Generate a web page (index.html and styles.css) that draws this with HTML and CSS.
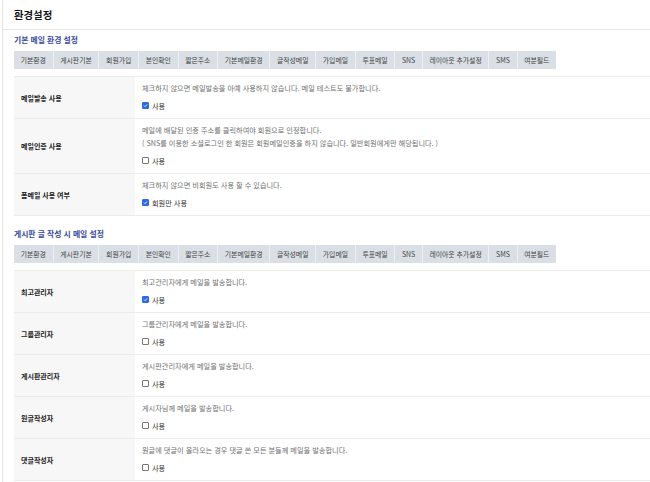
FILE: index.html
```html
<!DOCTYPE html>
<html lang="ko">
<head>
<meta charset="utf-8">
<title>환경설정</title>
<link rel="stylesheet" href="styles.css">
</head>
<body>
<div class="page">
  <div class="page-head"><h1>환경설정</h1></div>
  <div class="wrap">
    <h2 class="sec-title">기본 메일 환경 설정</h2>
    <ul class="tabs">
      <li>기본환경</li><li>게시판기본</li><li>회원가입</li><li>본인확인</li><li>짧은주소</li><li>기본메일환경</li><li>글작성메일</li><li>가입메일</li><li>투표메일</li><li>SNS</li><li>레이아웃 추가설정</li><li>SMS</li><li>여분필드</li>
    </ul>
    <div class="table">
      <div class="row">
        <div class="th">메일발송 사용</div>
        <div class="td">
          <p class="desc">체크하지 않으면 메일발송을 아예 사용하지 않습니다. 메일 테스트도 불가합니다.</p>
          <label class="chk"><span class="box on"><svg viewBox="0 0 8 8"><path d="M1.6 4.2 L3.3 5.9 L6.5 2.2" /></svg></span>사용</label>
        </div>
      </div>
      <div class="row">
        <div class="th">메일인증 사용</div>
        <div class="td">
          <p class="desc">메일에 배달된 인증 주소를 클릭하여야 회원으로 인정합니다.</p>
          <p class="desc">( SNS를 이용한 소셜로그인 한 회원은 회원메일인증을 하지 않습니다. 일반회원에게만 해당됩니다. )</p>
          <label class="chk"><span class="box"></span>사용</label>
        </div>
      </div>
      <div class="row">
        <div class="th">폼메일 사용 여부</div>
        <div class="td">
          <p class="desc">체크하지 않으면 비회원도 사용 할 수 있습니다.</p>
          <label class="chk"><span class="box on"><svg viewBox="0 0 8 8"><path d="M1.6 4.2 L3.3 5.9 L6.5 2.2" /></svg></span>회원만 사용</label>
        </div>
      </div>
    </div>

    <h2 class="sec-title second">게시판 글 작성 시 메일 설정</h2>
    <ul class="tabs">
      <li>기본환경</li><li>게시판기본</li><li>회원가입</li><li>본인확인</li><li>짧은주소</li><li>기본메일환경</li><li>글작성메일</li><li>가입메일</li><li>투표메일</li><li>SNS</li><li>레이아웃 추가설정</li><li>SMS</li><li>여분필드</li>
    </ul>
    <div class="table">
      <div class="row">
        <div class="th">최고관리자</div>
        <div class="td">
          <p class="desc">최고관리자에게 메일을 발송합니다.</p>
          <label class="chk"><span class="box on"><svg viewBox="0 0 8 8"><path d="M1.6 4.2 L3.3 5.9 L6.5 2.2" /></svg></span>사용</label>
        </div>
      </div>
      <div class="row">
        <div class="th">그룹관리자</div>
        <div class="td">
          <p class="desc">그룹관리자에게 메일을 발송합니다.</p>
          <label class="chk"><span class="box"></span>사용</label>
        </div>
      </div>
      <div class="row">
        <div class="th">게시판관리자</div>
        <div class="td">
          <p class="desc">게시판관리자에게 메일을 발송합니다.</p>
          <label class="chk"><span class="box"></span>사용</label>
        </div>
      </div>
      <div class="row">
        <div class="th">원글작성자</div>
        <div class="td">
          <p class="desc">게시자님께 메일을 발송합니다.</p>
          <label class="chk"><span class="box"></span>사용</label>
        </div>
      </div>
      <div class="row">
        <div class="th">댓글작성자</div>
        <div class="td">
          <p class="desc">원글에 댓글이 올라오는 경우 댓글 쓴 모든 분들께 메일을 발송합니다.</p>
          <label class="chk"><span class="box"></span>사용</label>
        </div>
      </div>
    </div>
  </div>
</div>
</body>
</html>
```

FILE: styles.css
```css
* { box-sizing: border-box; }
html, body { margin: 0; padding: 0; background: #fff; }
body {
  font-family: "Noto Sans CJK KR", "Noto Sans", sans-serif;
  font-size: 7px;
  color: #333;
  overflow: hidden;
}
.page {
  margin-left: 2px;
  border-left: 1px solid #e4e4e4;
  min-height: 482px;
}
.page-head {
  height: 30px;
  border-bottom: 1px solid #e8e8e8;
  padding-left: 11px;
  display: flex;
  align-items: center;
}
.page-head h1 {
  margin: 0;
  font-size: 10.4px;
  font-weight: 700;
  color: #111;
  line-height: 12px;
}
.wrap {
  padding-left: 11px;
}
.sec-title {
  margin: 5px 0 0;
  font-size: 7.8px;
  line-height: 10px;
  font-weight: 700;
  color: #3a4ba0;
}
.sec-title.second { margin-top: 13px; }
.tabs {
  list-style: none;
  margin: 6px 0 0;
  padding: 0;
  display: flex;
  width: max-content;
  background: #d9dfe4;
}
.tabs li {
  padding: 0 6.7px;
  line-height: 18px;
  height: 18px;
  font-size: 6.85px;
  color: #444;
  border-right: 1px solid #eef1f3;
  white-space: nowrap;
}
.tabs li:last-child { border-right: 0; }
.table {
  margin-top: 7px;
  border-top: 1px solid #ececec;
  width: 700px;
}
.row {
  display: flex;
  border-bottom: 1px solid #ececec;
}
.th {
  width: 121px;
  flex: none;
  background: #f7f7f7;
  padding-left: 7px;
  display: flex;
  align-items: center;
  font-weight: 700;
  color: #222;
}
.td {
  flex: 1;
  padding: 5px 7px 6px;
}
.desc {
  margin: 0;
  line-height: 13px;
  font-size: 7.2px;
  color: #707070;
  white-space: nowrap;
}
.chk {
  margin-top: 4px;
  display: flex;
  align-items: center;
  height: 13px;
  font-size: 7.2px;
  color: #333;
}
.box {
  width: 7px;
  height: 7px;
  border: 1px solid #777;
  border-radius: 1px;
  background: #fff;
  margin-right: 3px;
  display: inline-flex;
  flex: none;
}
.box.on {
  background: #2d6be0;
  border-color: #2d6be0;
}
.box svg {
  width: 100%;
  height: 100%;
  fill: none;
  stroke: #fff;
  stroke-width: 1.3;
}
```
